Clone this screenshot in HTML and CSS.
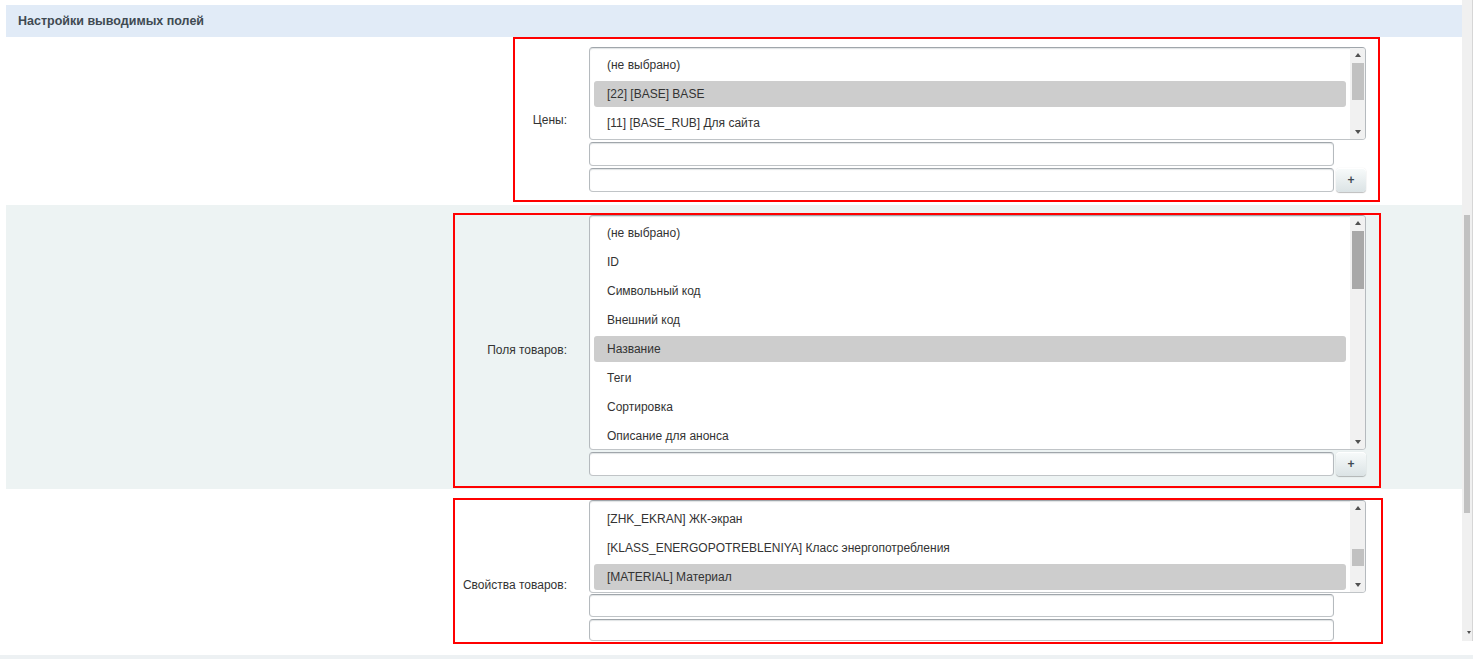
FILE: index.html
```html
<!DOCTYPE html>
<html lang="ru">
<head>
    <meta charset="UTF-8">
    <title>Настройки выводимых полей</title>
    <link rel="stylesheet" href="styles.css">
</head>
<body>
    <div class="frame">
        <div class="panel">
            <div class="section-head">Настройки выводимых полей</div>

            <div class="field-row">
                <div class="field-label">Цены:</div>
                <div class="field-control">
                    <div class="listbox listbox-prices">
                        <div class="listbox-items">
                            <div class="listbox-option">(не выбрано)</div>
                            <div class="listbox-option selected">[22] [BASE] BASE</div>
                            <div class="listbox-option">[11] [BASE_RUB] Для сайта</div>
                        </div>
                        <div class="listbox-bar">
                            <div class="bar-btn"><span class="arrow-up"></span></div>
                            <div class="bar-track"><div class="bar-thumb thumb-prices"></div></div>
                            <div class="bar-btn"><span class="arrow-down"></span></div>
                        </div>
                    </div>
                    <div class="input-line"><input type="text" class="text-input"></div>
                    <div class="input-line"><input type="text" class="text-input"><button class="add-btn">+</button></div>
                </div>
                <div class="mark mark-prices"></div>
            </div>

            <div class="field-row alt">
                <div class="field-label label-fields">Поля товаров:</div>
                <div class="field-control">
                    <div class="listbox listbox-fields">
                        <div class="listbox-items">
                            <div class="listbox-option">(не выбрано)</div>
                            <div class="listbox-option">ID</div>
                            <div class="listbox-option">Символьный код</div>
                            <div class="listbox-option">Внешний код</div>
                            <div class="listbox-option selected">Название</div>
                            <div class="listbox-option">Теги</div>
                            <div class="listbox-option">Сортировка</div>
                            <div class="listbox-option">Описание для анонса</div>
                        </div>
                        <div class="listbox-bar">
                            <div class="bar-btn"><span class="arrow-up"></span></div>
                            <div class="bar-track"><div class="bar-thumb thumb-fields"></div></div>
                            <div class="bar-btn"><span class="arrow-down"></span></div>
                        </div>
                    </div>
                    <div class="input-line"><input type="text" class="text-input"><button class="add-btn">+</button></div>
                </div>
                <div class="mark mark-fields"></div>
            </div>

            <div class="field-row row-props">
                <div class="field-label label-props">Свойства товаров:</div>
                <div class="field-control">
                    <div class="listbox listbox-props">
                        <div class="listbox-items">
                            <div class="listbox-option">[ZHK_EKRAN] ЖК-экран</div>
                            <div class="listbox-option">[KLASS_ENERGOPOTREBLENIYA] Класс энергопотребления</div>
                            <div class="listbox-option selected">[MATERIAL] Материал</div>
                        </div>
                        <div class="listbox-bar">
                            <div class="bar-btn"><span class="arrow-up"></span></div>
                            <div class="bar-track"><div class="bar-thumb thumb-props"></div></div>
                            <div class="bar-btn"><span class="arrow-down"></span></div>
                        </div>
                    </div>
                    <div class="input-line tight"><input type="text" class="text-input"></div>
                    <div class="input-line tight"><input type="text" class="text-input"></div>
                </div>
                <div class="mark mark-props"></div>
            </div>
        </div>

        <div class="page-scroll">
            <div class="page-thumb"></div>
            <span class="page-arrow"></span>
        </div>
    </div>
    <div class="bottom-line"></div>
</body>
</html>
```

FILE: styles.css
```css
html, body {
    margin: 0;
    padding: 0;
    overflow: hidden;
    background: #fff;
    font-family: "Liberation Sans", Arial, sans-serif;
    font-size: 12px;
    color: #333;
}
.frame {
    display: flex;
    height: 655px;
}
.panel {
    flex: 1;
    padding: 5px 0 0 6px;
}
.section-head {
    height: 32px;
    line-height: 32px;
    padding-left: 12px;
    background: #e1ebf7;
    font-size: 12.5px;
    font-weight: bold;
    color: #3f4a52;
}
.field-row {
    position: relative;
    display: grid;
    grid-template-columns: 561px 777px;
    column-gap: 22px;
    align-items: center;
    padding: 10px 0 13px;
}
.field-row.alt { background: #edf3f3; }
.field-row.row-props { padding-top: 11px; }
.field-label { text-align: right; }
.label-fields { padding-top: 8px; }
.label-props { padding-top: 28px; }

/* список с прокруткой */
.listbox {
    display: flex;
    box-sizing: border-box;
    border: 1px solid;
    border-color: #a0a6ab #b5babe #c0c4c7 #b5babe;
    border-radius: 4px;
    background: #fff;
    box-shadow: inset 0 1px 1px rgba(180,188,191,0.4);
    overflow: hidden;
}
.listbox-prices { height: 93px; }
.listbox-fields { height: 235px; }
.listbox-props { height: 93px; }
.listbox-items {
    flex: 1;
    padding: 2px 4px 0 4px;
    overflow: hidden;
}
.listbox-option {
    height: 26px;
    line-height: 26px;
    margin: 3px 0;
    padding-left: 13px;
    border-radius: 3px;
    white-space: nowrap;
}
.listbox-option:first-child { margin-top: 2px; }
.row-props .listbox-option:first-child { margin-top: 3px; }
.listbox-option.selected { background: #cdcdcd; }
.listbox-bar {
    width: 15px;
    display: flex;
    flex-direction: column;
    background: #f1f1f1;
}
.bar-btn {
    height: 14px;
    display: flex;
    align-items: center;
    justify-content: center;
}
.arrow-up, .arrow-down {
    width: 0;
    height: 0;
    border-left: 3.5px solid transparent;
    border-right: 3.5px solid transparent;
}
.arrow-up { border-bottom: 4px solid #505050; }
.arrow-down { border-top: 4px solid #505050; }
.bar-track { flex: 1; }
.bar-thumb {
    margin: 0 1px 0 2px;
    background: #c1c1c1;
}
.thumb-prices { margin-top: 1px; height: 37px; }
.thumb-fields { margin-top: 1px; height: 58px; background: #a8a8a8; }
.thumb-props { margin-top: 34px; height: 17px; }

.input-line {
    display: flex;
    gap: 2px;
    margin-top: 2px;
}
.input-line.tight { margin-top: 1px; }
.input-line.tight + .input-line.tight { margin-top: 2px; }
.text-input {
    box-sizing: border-box;
    width: 745px;
    height: 24px;
    margin: 0;
    border: 1px solid;
    border-color: #a0a6ab #b5babe #c0c4c7 #b5babe;
    border-radius: 4px;
    box-shadow: inset 0 1px 1px rgba(180,188,191,0.4);
    background: #fff;
}
.tight .text-input { height: 23px; }
.tight + .tight .text-input { height: 22px; }
.add-btn {
    width: 30px;
    height: 24px;
    padding: 0;
    border: none;
    border-radius: 4px;
    background: linear-gradient(#f8fbfb, #dbe3e5);
    box-shadow: 0 0 1px rgba(0,0,0,0.15), 0 1px 1px rgba(0,0,0,0.25), inset 0 1px #fff;
    font-family: "Liberation Sans", Arial, sans-serif;
    font-size: 12px;
    font-weight: bold;
    color: #3f4b54;
    cursor: pointer;
}

/* пометки красной рамкой */
.mark {
    position: absolute;
    box-sizing: border-box;
    border: 2px solid #ff0000;
    pointer-events: none;
}
.mark-prices { top: 0; left: 507px; width: 867px; height: 165px; }
.mark-fields { top: 8px; left: 447px; width: 928px; height: 275px; }
.mark-props { top: 9px; left: 447px; width: 930px; height: 146px; }

.page-scroll {
    width: 11px;
    height: 641px;
    box-sizing: border-box;
    border-right: 1px solid #d6d6d6;
    background: #f0f0f0;
    display: flex;
    flex-direction: column;
    align-items: center;
}
.page-thumb {
    width: 6px;
    height: 298px;
    margin-top: 215px;
    background: #c1c1c1;
}
.page-arrow {
    margin-top: auto;
    margin-bottom: 7px;
    margin-left: 4px;
    width: 0;
    height: 0;
    border-left: 2px solid transparent;
    border-right: 2px solid transparent;
    border-top: 3px solid #505050;
}
.bottom-line {
    height: 4px;
    background: #edf1f3;
}
```
